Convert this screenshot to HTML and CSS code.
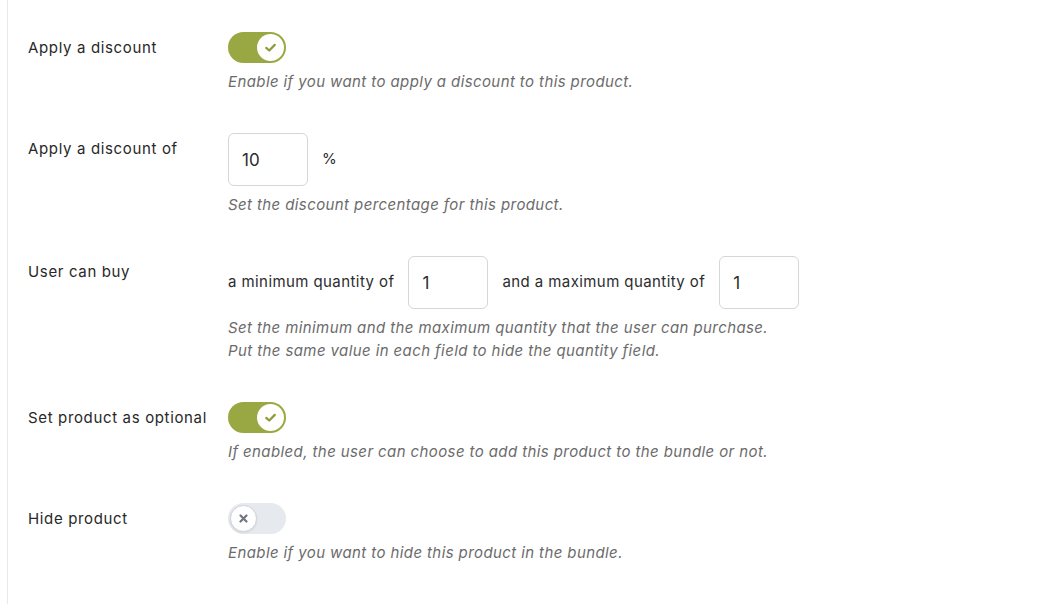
FILE: index.html
```html
<!DOCTYPE html>
<html>
<head>
<meta charset="utf-8">
<link rel="stylesheet" href="styles.css">
</head>
<body>
<div class="panel">
  <div class="row">
    <div class="label">Apply a discount</div>
    <div class="field">
      <div class="control">
        <span class="toggle on"><span class="knob"><svg class="icon" viewBox="0 0 12 12"><path d="M2.6 6.3 L5 8.4 L9.4 3.9" fill="none" stroke="#8f9c3c" stroke-width="1.8" stroke-linecap="round" stroke-linejoin="round"/></svg></span></span>
      </div>
      <div class="desc">Enable if you want to apply a discount to this product.</div>
    </div>
  </div>
  <div class="row">
    <div class="label">Apply a discount of</div>
    <div class="field">
      <div class="control">
        <input class="num" type="text" value="10">
        <span class="text">%</span>
      </div>
      <div class="desc">Set the discount percentage for this product.</div>
    </div>
  </div>
  <div class="row">
    <div class="label">User can buy</div>
    <div class="field">
      <div class="control">
        <span class="text">a minimum quantity of</span>
        <input class="num" type="text" value="1">
        <span class="text">and a maximum quantity of</span>
        <input class="num" type="text" value="1">
      </div>
      <div class="desc">Set the minimum and the maximum quantity that the user can purchase.<br>Put the same value in each field to hide the quantity field.</div>
    </div>
  </div>
  <div class="row">
    <div class="label">Set product as optional</div>
    <div class="field">
      <div class="control">
        <span class="toggle on"><span class="knob"><svg class="icon" viewBox="0 0 12 12"><path d="M2.6 6.3 L5 8.4 L9.4 3.9" fill="none" stroke="#8f9c3c" stroke-width="1.8" stroke-linecap="round" stroke-linejoin="round"/></svg></span></span>
      </div>
      <div class="desc">If enabled, the user can choose to add this product to the bundle or not.</div>
    </div>
  </div>
  <div class="row">
    <div class="label">Hide product</div>
    <div class="field">
      <div class="control">
        <span class="toggle off"><span class="knob"><svg class="icon" viewBox="0 0 12 12"><path d="M3.6 3.6 L8.4 8.4 M8.4 3.6 L3.6 8.4" fill="none" stroke="#727780" stroke-width="1.8" stroke-linecap="round"/></svg></span></span>
      </div>
      <div class="desc">Enable if you want to hide this product in the bundle.</div>
    </div>
  </div>
</div>
</body>
</html>
```
FILE: styles.css
```css
html, body {
  margin: 0;
  padding: 0;
  background: #ffffff;
}
body {
  font-family: Inter, "Liberation Sans", sans-serif;
  color: #2c2c2c;
  font-size: 15px;
}
.panel {
  margin-left: 7px;
  border-left: 1px solid #e9e9e9;
  padding: 12px 0 20px 20px;
  min-height: 572px;
}
.row {
  display: flex;
  padding: 20px 0;
}
.label {
  width: 200px;
  flex: none;
  line-height: 31px;
  font-size: 15px;
  letter-spacing: 0.65px;
  color: #282828;
}
.field {
  display: flex;
  flex-direction: column;
}
.control {
  display: flex;
  align-items: center;
  gap: 14px;
}
.text {
  font-size: 15px;
  letter-spacing: 0.42px;
  color: #2c2c2c;
  position: relative;
  top: -1px;
}
.num {
  box-sizing: border-box;
  width: 80px;
  height: 53px;
  border: 1px solid #d6d6d6;
  border-radius: 6px;
  padding: 0 13px;
  font-family: Inter, "Liberation Sans", sans-serif;
  font-size: 17px;
  color: #2c2c2c;
  background: #fff;
  outline: none;
  margin: 0;
}
.toggle {
  display: flex;
  align-items: center;
  box-sizing: border-box;
  width: 58px;
  height: 31px;
  border-radius: 16px;
  padding: 2px;
}
.toggle.on {
  background: #9aa843;
  justify-content: flex-end;
}
.toggle.off {
  background: #e6e9ee;
  justify-content: flex-start;
}
.knob {
  box-sizing: border-box;
  width: 27px;
  height: 27px;
  border-radius: 50%;
  background: #fff;
  display: flex;
  align-items: center;
  justify-content: center;
}
.icon {
  width: 15px;
  height: 15px;
  display: block;
}
.toggle.off .knob {
  border: 1px solid #cfd3d9;
  box-shadow: 0 1px 2px rgba(0,0,0,0.08);
}
.desc {
  margin-top: 7px;
  font-size: 15px;
  line-height: 23px;
  letter-spacing: 0.4px;
  font-style: italic;
  color: #6b6b6b;
}
```
